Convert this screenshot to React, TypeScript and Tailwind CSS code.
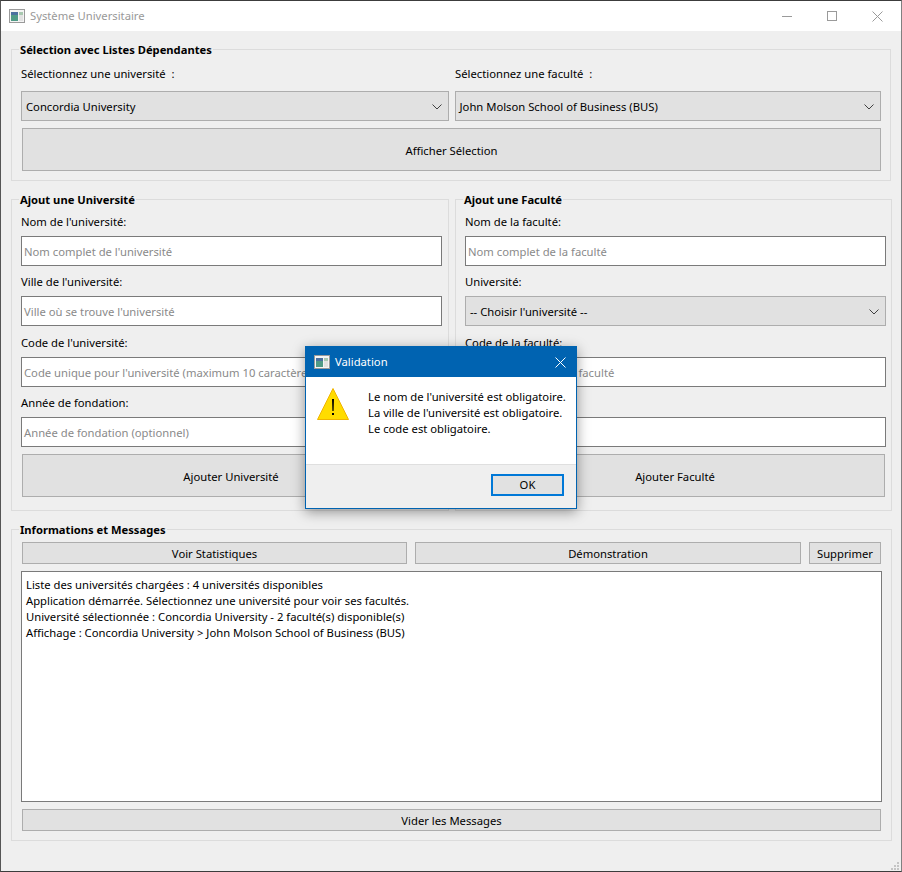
import type { ReactNode } from 'react';

const font = 'font-["Noto_Sans","Open_Sans",sans-serif]';

function AppIcon() {
  return (
    <svg width="16" height="16" viewBox="0 0 16 16" className="shrink-0">
      <rect x="0.5" y="1.5" width="15" height="13" fill="#f4f4f4" stroke="#9a9a9a" />
      <rect x="2" y="4" width="7" height="9" fill="#4f9a86" />
      <rect x="2" y="4" width="7" height="3" fill="#4a6f9f" />
      <rect x="10" y="4" width="4" height="3" fill="#a8c8b0" />
      <rect x="10" y="7" width="4" height="6" fill="#e2e2e2" />
    </svg>
  );
}

function Chevron() {
  return (
    <svg width="10" height="6" viewBox="0 0 10 6" fill="none" stroke="#404040" strokeWidth="1" className="shrink-0">
      <path d="M0.5 0.5 L5 5 L9.5 0.5" />
    </svg>
  );
}

function GroupBox({ title, className, children }: { title: string; className: string; children: ReactNode }) {
  return (
    <div className={`relative border border-[#dcdcdc] ${className}`}>
      <span className="absolute left-[7px] top-[-8px] bg-[#efefef] px-px text-[11.2px] leading-[16px] font-bold text-black">
        {title}
      </span>
      {children}
    </div>
  );
}

function Combo({ text, className }: { text: string; className: string }) {
  return (
    <div className={`flex h-[30px] items-center justify-between border border-[#adadad] bg-[#e1e1e1] pt-[2px] pl-[4px] pr-[6px] text-black ${className}`}>
      <span>{text}</span>
      <Chevron />
    </div>
  );
}

function Field({ placeholder, className }: { placeholder?: string; className?: string }) {
  return (
    <div className={`flex h-[30px] items-center overflow-hidden border border-[#7a7a7a] bg-white pt-[2px] pl-[2px] whitespace-nowrap text-[#8a8a8a] ${className ?? ''}`}>
      {placeholder}
    </div>
  );
}

function Btn({ text, className }: { text: string; className: string }) {
  return (
    <button className={`flex items-center justify-center border border-[#adadad] bg-[#e1e1e1] text-black ${className}`}>
      {text}
    </button>
  );
}

function Label({ text, className }: { text: string; className: string }) {
  return <div className={`leading-[16px] text-black ${className}`}>{text}</div>;
}

export default function App() {
  return (
    <div className={`${font} relative flex h-[872px] w-[902px] flex-col overflow-hidden border-t border-r border-b border-l border-t-[#3c3c3c] border-r-[#808080] border-b-[#3c3c3c] border-l-[#555555] bg-[#efefef] text-[11.25px]`}>
      <div className="flex h-[30px] items-center bg-white pl-[8px]">
        <AppIcon />
        <span className="ml-[5px] text-[#999999]">Système Universitaire</span>
        <div className="ml-auto flex items-center pr-[18px]">
          <div className="h-px w-[10px] bg-[#9a9a9a]" />
          <div className="ml-[35px] h-[10px] w-[10px] border border-[#9a9a9a]" />
          <svg width="11" height="11" viewBox="0 0 11 11" stroke="#9a9a9a" fill="none" className="ml-[35px]">
            <path d="M0.5 0.5 L10.5 10.5 M10.5 0.5 L0.5 10.5" />
          </svg>
        </div>
      </div>

      <GroupBox title="Sélection avec Listes Dépendantes" className="ml-[10px] mt-[18px] h-[132px] w-[880px] shrink-0 px-[9px]">
        <div className="mt-[16px] flex">
          <Label text="Sélectionnez une université  :" className="w-[434px] whitespace-pre" />
          <Label text="Sélectionnez une faculté  :" className="whitespace-pre" />
        </div>
        <div className="mt-[9px] flex gap-[6px]">
          <Combo text="Concordia University" className="w-[428px]" />
          <Combo text="John Molson School of Business (BUS)" className="w-[427px]" />
        </div>
        <Btn text="Afficher Sélection" className="ml-px mt-[7px] h-[43px] w-[859px] pt-[4px]" />
      </GroupBox>

      <div className="ml-[10px] mt-[18px] flex shrink-0 gap-[6px]">
        <GroupBox title="Ajout une Université" className="h-[312px] w-[438px] pl-[9px]">
          <Label text="Nom de l'université:" className="mt-[14px]" />
          <Field placeholder="Nom complet de l'université" className="mt-[6px] w-[421px]" />
          <Label text="Ville de l'université:" className="mt-[8px]" />
          <Field placeholder="Ville où se trouve l'université" className="mt-[6px] w-[421px]" />
          <Label text="Code de l'université:" className="mt-[9px]" />
          <Field placeholder="Code unique pour l'université (maximum 10 caractères)" className="mt-[6px] w-[421px]" />
          <Label text="Année de fondation:" className="mt-[8px]" />
          <Field placeholder="Année de fondation (optionnel)" className="mt-[6px] w-[421px]" />
          <Btn text="Ajouter Université" className="ml-px mt-[7px] h-[43px] w-[418px] pt-[4px]" />
        </GroupBox>
        <GroupBox title="Ajout une Faculté" className="h-[312px] w-[437px] pl-[9px]">
          <Label text="Nom de la faculté:" className="mt-[14px]" />
          <Field placeholder="Nom complet de la faculté" className="mt-[6px] w-[421px]" />
          <Label text="Université:" className="mt-[8px]" />
          <Combo text="-- Choisir l'université --" className="mt-[6px] w-[421px]" />
          <Label text="Code de la faculté:" className="mt-[9px]" />
          <Field placeholder="Code unique pour la faculté" className="mt-[6px] w-[421px]" />
          {/* the label and hint of this row are hidden behind the dialog */}
          <div className="mt-[8px] h-[16px]" />
          <Field className="mt-[6px] w-[421px]" />
          <Btn text="Ajouter Faculté" className="mt-[7px] h-[43px] w-[420px] pt-[4px]" />
        </GroupBox>
      </div>

      <GroupBox title="Informations et Messages" className="ml-[10px] mt-[18px] h-[312px] w-[881px] shrink-0 pl-[9px]">
        <div className="mt-[12px] flex gap-[8px] pl-px">
          <Btn text="Voir Statistiques" className="h-[22px] w-[385px] pt-[2px]" />
          <Btn text="Démonstration" className="h-[22px] w-[386px] pt-[2px]" />
          <Btn text="Supprimer" className="h-[22px] w-[72px] pt-[2px]" />
        </div>
        <div className="mt-[7px] h-[231px] w-[861px] border border-[#7a7a7a] bg-white px-[4px] pt-[5px] leading-[16px] text-black">
          <div>Liste des universités chargées : 4 universités disponibles</div>
          <div>Application démarrée. Sélectionnez une université pour voir ses facultés.</div>
          <div>Université sélectionnée : Concordia University - 2 faculté(s) disponible(s)</div>
          <div>Affichage : Concordia University &gt; John Molson School of Business (BUS)</div>
        </div>
        <Btn text="Vider les Messages" className="ml-px mt-[7px] h-[22px] w-[859px] pt-[2px]" />
      </GroupBox>

      <div className="absolute right-[2px] bottom-[1px] grid grid-cols-3 gap-px">
        <span />
        <span />
        <span className="h-[2px] w-[2px] bg-[#c4c4c4]" />
        <span />
        <span className="h-[2px] w-[2px] bg-[#c4c4c4]" />
        <span className="h-[2px] w-[2px] bg-[#c4c4c4]" />
        <span className="h-[2px] w-[2px] bg-[#c4c4c4]" />
        <span className="h-[2px] w-[2px] bg-[#c4c4c4]" />
        <span className="h-[2px] w-[2px] bg-[#c4c4c4]" />
      </div>

      <div className="absolute left-[304px] top-[345px] flex h-[163px] w-[272px] flex-col border border-[#0063b1] bg-[#efefef] shadow-[0_3px_12px_rgba(0,0,0,0.4)]">
        <div className="flex h-[30px] shrink-0 items-center bg-[#0063b1] pl-[8px] text-white">
          <AppIcon />
          <span className="ml-[5px]">Validation</span>
          <svg width="11" height="11" viewBox="0 0 11 11" stroke="#ffffff" fill="none" className="ml-auto mr-[10px]">
            <path d="M0.5 0.5 L10.5 10.5 M10.5 0.5 L0.5 10.5" />
          </svg>
        </div>
        <div className="flex h-[88px] shrink-0 border-b border-[#dfdfdf] bg-white pl-[11px] pt-[11px]">
          <svg width="32" height="33" viewBox="0 0 32 33" className="shrink-0">
            <path d="M16 0.5 L31.5 31.5 L0.5 31.5 Z" fill="#ffdc00" stroke="#f0b400" strokeLinejoin="round" />
            <path d="M15 11 H17 L16.6 23 H15.4 Z" fill="#000000" />
            <rect x="15" y="25" width="2" height="2" fill="#000000" />
          </svg>
          <div className="ml-[19px] whitespace-nowrap pt-[1px] leading-[16px] text-black">
            <div>Le nom de l'université est obligatoire.</div>
            <div>La ville de l'université est obligatoire.</div>
            <div>Le code est obligatoire.</div>
          </div>
        </div>
        <div className="flex flex-1 justify-end pr-[12px] pt-[9px]">
          <button className="flex h-[22px] w-[73px] items-center justify-center border-2 border-[#0078d7] bg-[#e1e1e1] pt-[1px] text-black">
            OK
          </button>
        </div>
      </div>
    </div>
  );
}
